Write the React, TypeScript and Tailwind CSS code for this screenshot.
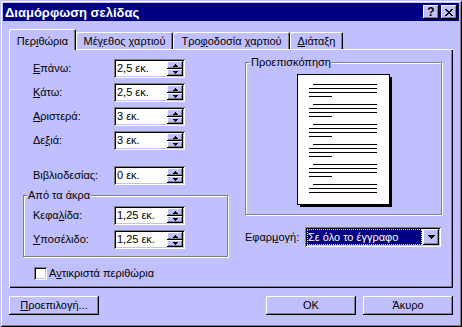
import React from "react";

// win98-ish bevels on a lavender scheme
const raised = "shadow-[inset_-1px_-1px_0_#000,inset_1px_1px_0_#fff,inset_-2px_-2px_0_#808080]";
const sunken = "shadow-[inset_1px_1px_0_#808080,inset_-1px_-1px_0_#fff,inset_2px_2px_0_#000,inset_-2px_-2px_0_#C0C0FF]";
const etched = "border border-[#808080] shadow-[1px_1px_0_#fff,inset_1px_1px_0_#fff]";

function UpArrow() {
  return (
    <svg width="5" height="3" viewBox="0 0 5 3" shapeRendering="crispEdges">
      <path d="M2 0h1v1h-1z M1 1h3v1h-3z M0 2h5v1h-5z" fill="#000" />
    </svg>
  );
}

function DownArrow({ w = 5 }: { w?: number }) {
  const d = w === 7
    ? "M0 0h7v1h-7z M1 1h5v1h-5z M2 2h3v1h-3z M3 3h1v1h-1z"
    : "M0 0h5v1h-5z M1 1h3v1h-3z M2 2h1v1h-1z";
  return (
    <svg width={w} height={w === 7 ? 4 : 3} viewBox={`0 0 ${w} ${w === 7 ? 4 : 3}`} shapeRendering="crispEdges">
      <path d={d} fill="#000" />
    </svg>
  );
}

function Spin({ value }: { value: string }) {
  return (
    <div className={`w-[71px] h-[19px] bg-white p-[2px] flex ${sunken}`}>
      <span className="flex-1 pl-px leading-[15px]">{value}</span>
      <div className="w-[16px] flex flex-col">
        <div className={`h-[8px] bg-[#C0C0FF] flex items-center justify-center ${raised}`}>
          <UpArrow />
        </div>
        <div className={`h-[7px] bg-[#C0C0FF] flex items-center justify-center ${raised}`}>
          <DownArrow />
        </div>
      </div>
    </div>
  );
}

function Row({ label, value }: { label: React.ReactNode; value: string }) {
  return (
    <div className="flex items-center h-[19px]">
      <span className="w-[81px]">{label}</span>
      <Spin value={value} />
    </div>
  );
}

function Button({ children, className = "" }: { children: React.ReactNode; className?: string }) {
  return (
    <div className={`w-[90px] h-[19px] bg-[#C0C0FF] flex items-center justify-center ${raised} ${className}`}>
      {children}
    </div>
  );
}

function Page() {
  const paras = [10, 30, 50, 70, 90, 110];
  return (
    <svg width="95" height="133" viewBox="0 0 95 133" shapeRendering="crispEdges">
      <rect x="3" y="3" width="92" height="130" fill="#000" />
      <rect x="0.5" y="0.5" width="92" height="130" fill="#fff" stroke="#000" />
      {paras.map((y, i) => (
        <g key={i} fill="#000">
          <rect x="16" y={y} width="64" height="1" />
          <rect x="12" y={y + 4} width="68" height="1" />
          <rect x="12" y={y + 8} width="68" height="1" />
          {i < paras.length - 1 && <rect x="12" y={y + 12} width="23" height="1" />}
        </g>
      ))}
    </svg>
  );
}

export default function App() {
  return (
    <div className="w-[462px] h-[327px] bg-[#C0C0FF] p-[3px] flex flex-col font-['Liberation_Sans',Arial,sans-serif] text-[11px] leading-[13px] text-black shadow-[inset_1px_1px_0_#C0C0FF,inset_-1px_-1px_0_#000,inset_2px_2px_0_#fff,inset_-2px_-2px_0_#808080]">

      {/* Title bar */}
      <div className="h-[18px] bg-[#000080] flex items-center pl-[2px] pr-[2px]">
        <span className="flex-1 text-white font-bold text-[13px]">Διαμόρφωση σελίδας</span>
        <div className={`w-[16px] h-[14px] bg-[#C0C0FF] flex items-center justify-center font-bold text-[12px] ${raised}`}>?</div>
        <div className={`w-[16px] h-[14px] ml-[2px] bg-[#C0C0FF] flex items-center justify-center ${raised}`}>
          <svg width="8" height="7" viewBox="0 0 8 7" shapeRendering="crispEdges">
            <path d="M0 0h2v1h-2z M6 0h2v1h-2z M1 1h2v1h-2z M5 1h2v1h-2z M2 2h4v1h-4z M3 3h2v1h-2z M2 4h4v1h-4z M1 5h2v1h-2z M5 5h2v1h-2z M0 6h2v1h-2z M6 6h2v1h-2z" fill="#000" />
          </svg>
        </div>
      </div>

      {/* Tabs */}
      <div className="mt-[8px] px-[6px] h-[20px] flex items-end">
        <div className="relative z-10 w-[67px] h-[21px] -mb-px pt-[6px] bg-[#C0C0FF] text-center rounded-t-[2px] shadow-[inset_1px_1px_0_#fff,inset_-1px_0_0_#000,inset_-2px_0_0_#808080]">
          Περ<u>ι</u>θώρια
        </div>
        <div className="w-[97px] h-[17px] pt-[3px] text-center rounded-t-[2px] shadow-[inset_1px_1px_0_#fff,inset_-1px_0_0_#000,inset_-2px_0_0_#808080]">
          Μέ<u>γ</u>εθος χαρτιού
        </div>
        <div className="w-[117px] h-[17px] pt-[3px] text-center rounded-t-[2px] shadow-[inset_1px_1px_0_#fff,inset_-1px_0_0_#000,inset_-2px_0_0_#808080]">
          Τρο<u>φ</u>οδοσία χαρτιού
        </div>
        <div className="w-[53px] h-[17px] pt-[3px] text-center rounded-t-[2px] shadow-[inset_1px_1px_0_#fff,inset_-1px_0_0_#000,inset_-2px_0_0_#808080]">
          <u>Δ</u>ιάταξη
        </div>
      </div>

      {/* Tab panel */}
      <div className="mx-[6px] h-[239px] flex shadow-[inset_1px_1px_0_#fff,inset_-1px_-1px_0_#000,inset_-2px_-2px_0_#808080]">

        {/* Margins column */}
        <div className="w-[205px] ml-[14px] pt-[10px] flex flex-col">
          <div className="pl-[10px] flex flex-col gap-[5px]">
            <Row label={<><u>Ε</u>πάνω:</>} value="2,5 εκ." />
            <Row label={<><u>Κ</u>άτω:</>} value="2,5 εκ." />
            <Row label={<><u>Α</u>ριστερά:</>} value="3 εκ." />
            <Row label={<>Δε<u>ξ</u>ιά:</>} value="3 εκ." />
          </div>
          <div className="pl-[10px] mt-[16px]">
            <Row label="Βιβλιοδεσίας:" value="0 εκ." />
          </div>

          <div className={`mt-[10px] h-[62px] flex flex-col ${etched}`}>
            <span className="-mt-[7px] ml-[3px] px-px self-start bg-[#C0C0FF]">Από τα άκρα</span>
            <div className="mt-[4px] pl-[9px] flex flex-col gap-[5px]">
              <Row label={<>Κεφα<u>λ</u>ίδα:</>} value="1,25 εκ." />
              <Row label={<><u>Υ</u>ποσέλιδο:</>} value="1,25 εκ." />
            </div>
          </div>

          <div className="mt-[10px] ml-[11px] flex items-center gap-[2px]">
            <span className={`w-[13px] h-[13px] bg-white ${sunken}`} />
            <span>Α<u>ν</u>τικριστά περιθώρια</span>
          </div>
        </div>

        {/* Preview column */}
        <div className="ml-[17px] pt-[13px] flex flex-col">
          <div className={`w-[197px] h-[153px] flex flex-col ${etched}`}>
            <span className="-mt-[7px] ml-[4px] px-px self-start bg-[#C0C0FF]">Προεπισκόπηση</span>
            <div className="mt-[5px] ml-[51px]">
              <Page />
            </div>
          </div>

          <div className="mt-[12px] h-[20px] flex items-center">
            <span className="w-[60px]">Εφαρ<u>μ</u>ογή:</span>
            <div className={`w-[136px] h-[20px] bg-white p-[2px] flex ${sunken}`}>
              <div className="flex-1 mr-px bg-[#000080] text-white border border-dotted border-[#FFFF00] leading-[14px]">
                Σε όλο το έγγραφο
              </div>
              <div className={`w-[16px] bg-[#C0C0FF] flex items-center justify-center ${raised}`}>
                <DownArrow w={7} />
              </div>
            </div>
          </div>
        </div>
      </div>

      {/* Buttons */}
      <div className="mt-[8px] px-[6px] flex">
        <Button><span><u>Π</u>ροεπιλογή...</span></Button>
        <Button className="ml-auto">OK</Button>
        <Button className="ml-[7px]">Άκυρο</Button>
      </div>
    </div>
  );
}
